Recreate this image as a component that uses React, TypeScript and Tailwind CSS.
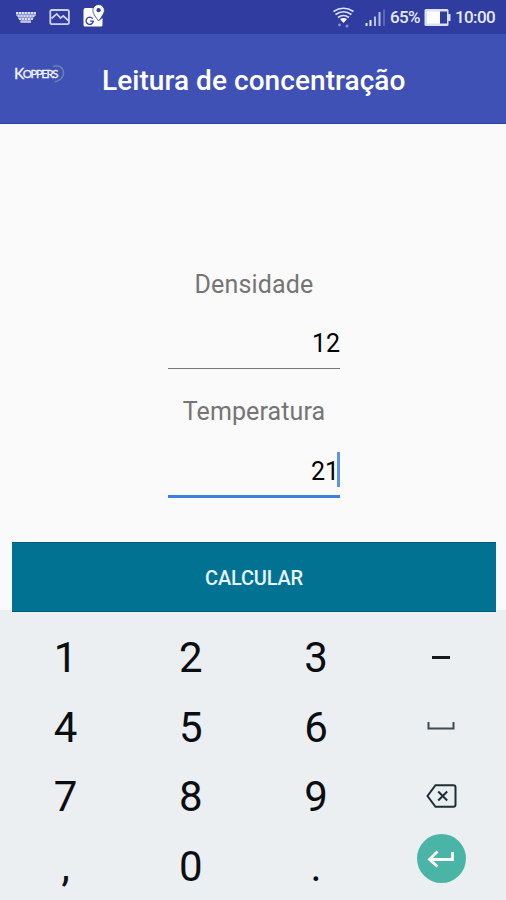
const keyRows = [
  ['1', '2', '3', 'minus'],
  ['4', '5', '6', 'space'],
  ['7', '8', '9', 'delete'],
  [',', '0', '.', 'enter'],
];

function StatusBar() {
  return (
    <div className="flex h-[34px] items-center bg-[#303c9f] text-[#e4e9fb]">
      <svg className="h-[34px] w-[120px]" viewBox="0 0 120 34" fill="none">
        <path d="M16 12h20v4h-2.500v3H31v3.500H20.500V19H18v-3h-2z" fill="#8f98d0" />
        <path d="M16 13h20M17.500 16h17M19 19h14" stroke="#d5daf2" strokeWidth="1.800" strokeDasharray="2 1" />
        <path d="M20.500 21.800h10.500" stroke="#c3c8e8" strokeWidth="2" />
        <rect x="50.300" y="10" width="18.600" height="14.200" rx="1.600" stroke="#ccd2f0" strokeWidth="1.800" />
        <path d="M51.500 18.500l5.200-4.600 3.800 4.200 2.800-2.200 5 4.600" stroke="#ccd2f0" strokeWidth="1.800" />
        <path d="M85.500 8h8l1 7 4 6 4-3v7q0 1.500-1.500 1.500H85q-1.500 0-1.500-1.500V10q0-2 2-2z" fill="#fff" />
        <path d="M92.600 18.600a3.600 3.600 0 1 0 .7 2.500h-3.200" stroke="#303c9f" strokeWidth="1.300" />
        <path d="M98.600 4.500a5.800 5.800 0 0 1 5.800 5.800c0 4-5.800 10.500-5.800 10.500s-5.800-6.500-5.800-10.500a5.800 5.800 0 0 1 5.800-5.800z" fill="#fff" stroke="#303c9f" strokeWidth=".8" />
        <circle cx="98.600" cy="10.200" r="2.100" fill="#303c9f" />
      </svg>
      <svg className="ml-[210px] h-[34px] w-[60px]" viewBox="330 0 60 34" fill="none">
        <path d="M333.500 11.500q10-6.500 20 0M335.500 14.500q8-5.500 16 0M338 17.500q5.500-4 11 0" stroke="#dce2fa" strokeWidth="1.700" />
        <path d="M340 19q3.500-2 7 0l-3.500 4z" fill="#fff" />
        <circle cx="339.500" cy="25" r="1.400" fill="#8490d5" />
        <circle cx="347" cy="26" r="1.500" fill="#8490d5" />
        <path d="M366.500 23v3M370.500 20v6" stroke="#e4e9fb" strokeWidth="2" />
        <path d="M375 16.500V26M379.500 12v14" stroke="#b5bde8" strokeWidth="2" />
        <path d="M384 9.500V26" stroke="#6674c4" strokeWidth="1.500" />
      </svg>
      <span className="w-[31px] whitespace-nowrap text-[17px] font-medium leading-[36px] tracking-[-0.6px]">65%</span>
      <svg className="ml-[3px] h-[34px] w-[28px]" viewBox="424 0 28 34">
        <rect x="424.500" y="9" width="24" height="17" rx="1.500" fill="#dbe0f5" />
        <rect x="440" y="11.500" width="7" height="12" fill="#303c9f" />
        <rect x="448" y="14" width="2.500" height="7" fill="#dbe0f5" />
        <rect x="427" y="11.500" width="13" height="12" fill="#fff" />
      </svg>
      <span className="ml-[3px] whitespace-nowrap text-[17px] font-medium leading-[36px] tracking-[-0.6px]">10:00</span>
    </div>
  );
}

function Logo() {
  return (
    <svg className="ml-[12px] mt-[28px] h-[24px] w-[54px] shrink-0" viewBox="12 62 54 24">
      <path d="M53 66.500q6.500-2.300 9.500 2.500c3 6-1 11.500-8 13" fill="none" stroke="#6682a8" strokeWidth="1.500" />
      <text x="14" y="79" fill="#f2f5ff" stroke="#f2f5ff" strokeWidth=".3" fontFamily="Lato, sans-serif" fontSize="11.500" letterSpacing="-1.500">
        <tspan fontSize="15.500">K</tspan>
        <tspan dy="-1">OPPERS</tspan>
      </text>
    </svg>
  );
}

function KeyLabel({ name }: { name: string }) {
  switch (name) {
    case 'minus':
      return <span className="h-[3px] w-[18px] bg-[#15191c]" />;
    case 'space':
      return (
        <svg className="mb-[4px] h-[8px] w-[28px]" viewBox="0 0 28 8" fill="none" stroke="#3f4b52" strokeWidth="2">
          <path d="M1.500 0v6.500h25V0" />
        </svg>
      );
    case 'delete':
      return (
        <svg className="mb-[2px] h-[24px] w-[31px]" viewBox="0 0 31 24" fill="none" stroke="#1e2f38" strokeWidth="2">
          <path d="M9.500 1.200h18q2 0 2 2v17.600q0 2-2 2h-18L1.500 12z" />
          <path d="M12.200 7.500l9 9M21.200 7.500l-9 9" />
        </svg>
      );
    case 'enter':
      return (
        <span className="mb-[16px] flex size-[49px] items-center justify-center rounded-full bg-[#4ab5a6]">
          <svg className="h-[18px] w-[28px]" viewBox="0 0 28 18" fill="none" stroke="#fff" strokeWidth="2.800">
            <path d="M25.500 2v7.500H3M10.500 1.500l-8 8 8 7" />
          </svg>
        </span>
      );
    default:
      return <span>{name}</span>;
  }
}

export default function App() {
  return (
    <div className="flex h-[900px] w-[506px] flex-col overflow-hidden bg-[#fafafa] font-['Roboto',sans-serif]">
      <StatusBar />
      <header className="flex h-[90px] border-b border-[#2c42a8] bg-[#3f51b5]">
        <Logo />
        <h1 className="ml-[36px] whitespace-nowrap text-[28px] font-medium leading-[94px] tracking-[0.06px] text-white">
          Leitura de concentração
        </h1>
      </header>
      <main className="z-10 flex h-[486px] flex-col items-center pl-[2px]">
        <label className="mt-[143px] text-[25px] leading-[35px] tracking-[0.150px] text-[#757575]">Densidade</label>
        <div className="mt-[17px] flex h-[50px] w-[172px] justify-end border-b border-[#777] text-[25px] leading-[50px] text-black">
          12
        </div>
        <label className="mt-[26px] text-[25px] leading-[34px] tracking-[0.100px] text-[#757575]">Temperatura</label>
        <div className="mt-[18px] flex h-[51px] w-[172px] items-start justify-end border-b-[3px] border-[#3c82dc] text-[25px] leading-[50px] text-black">
          <span className="-mr-[2px]">21</span>
          <span className="mt-[5px] h-[35px] w-[3px] bg-[#5e94e4]" />
        </div>
        <button className="mt-[44px] h-[70px] w-[484px] shrink-0 border-y border-[#005c7d] bg-[#027293] pt-[2px] text-[20px] font-medium tracking-[-0.2px] text-[#e8f5f8]">
          CALCULAR
        </button>
      </main>
      <section className="flex flex-1 flex-col bg-[#ebeff2] pl-[3px] pt-[13px]">
        {keyRows.map((row) => (
          <div key={row[0]} className="grid h-[69.700px] shrink-0 grid-cols-[repeat(4,125.200px)]">
            {row.map((name) => (
              <div key={name} className="flex items-center justify-center text-[42px] leading-none text-[#0a0e10]">
                <KeyLabel name={name} />
              </div>
            ))}
          </div>
        ))}
      </section>
    </div>
  );
}
